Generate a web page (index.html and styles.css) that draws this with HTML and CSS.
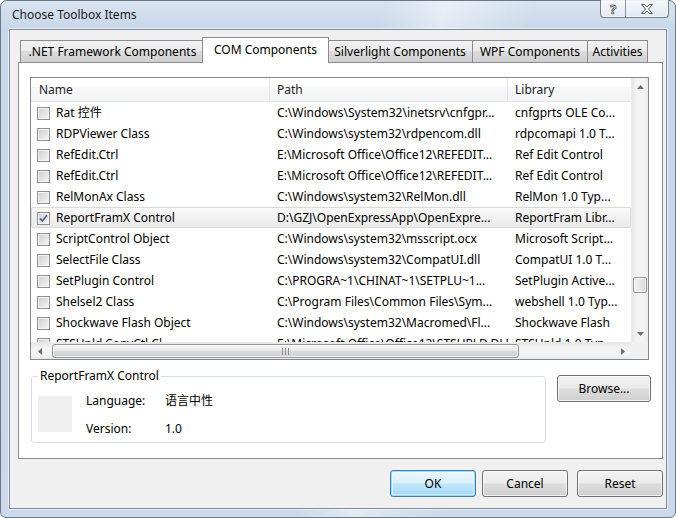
FILE: index.html
```html
<!DOCTYPE html>
<html lang="en">
<head>
    <meta charset="UTF-8">
    <title>Choose Toolbox Items</title>
    <link rel="stylesheet" href="styles.css">
</head>
<body>
    <div class="window">
        <div class="titlebar">
            <span class="title">Choose Toolbox Items</span>
            <div class="caption">
                <span class="cap cap-help">?</span>
                <span class="cap cap-close">
                    <svg width="12" height="10" viewBox="0 0 12 10">
                        <polygon points="0.5,0.5 3.5,0.5 6,3 8.5,0.5 11.5,0.5 7.5,5 11.5,9.5 8.5,9.5 6,7 3.5,9.5 0.5,9.5 4.5,5" fill="#fafafa" stroke="#5a5a5a" stroke-width="1"/>
                    </svg>
                </span>
            </div>
        </div>

        <div class="client">
            <div class="tabs">
                <div class="tab tab-net">.NET Framework Components</div>
                <div class="tab tab-com sel">COM Components</div>
                <div class="tab tab-sl">Silverlight Components</div>
                <div class="tab tab-wpf">WPF Components</div>
                <div class="tab tab-act">Activities</div>
            </div>

            <div class="panel">
                <div class="listview">
                    <div class="lv-view">
                        <div class="lv-head">
                            <div class="hcell">Name</div>
                            <div class="hcell">Path</div>
                            <div class="hcell">Library</div>
                        </div>
                        <div class="lv-row">
                            <div class="cell name"><span class="cb"></span>Rat 控件</div>
                            <div class="cell">C:\Windows\System32\inetsrv\cnfgpr...</div>
                            <div class="cell">cnfgprts OLE Co...</div>
                        </div>
                        <div class="lv-row">
                            <div class="cell name"><span class="cb"></span>RDPViewer Class</div>
                            <div class="cell">C:\Windows\system32\rdpencom.dll</div>
                            <div class="cell">rdpcomapi 1.0 T...</div>
                        </div>
                        <div class="lv-row">
                            <div class="cell name"><span class="cb"></span>RefEdit.Ctrl</div>
                            <div class="cell">E:\Microsoft Office\Office12\REFEDIT...</div>
                            <div class="cell">Ref Edit Control</div>
                        </div>
                        <div class="lv-row">
                            <div class="cell name"><span class="cb"></span>RefEdit.Ctrl</div>
                            <div class="cell">E:\Microsoft Office\Office12\REFEDIT...</div>
                            <div class="cell">Ref Edit Control</div>
                        </div>
                        <div class="lv-row">
                            <div class="cell name"><span class="cb"></span>RelMonAx Class</div>
                            <div class="cell">C:\Windows\system32\RelMon.dll</div>
                            <div class="cell">RelMon 1.0 Typ...</div>
                        </div>
                        <div class="lv-row sel">
                            <div class="cell name">
                                <span class="cb checked">
                                    <svg width="11" height="11" viewBox="0 0 11 11"><path d="M2 5.5 L4.3 8 L9 2.2" fill="none" stroke="#4b5f9c" stroke-width="1.7"/></svg>
                                </span>ReportFramX Control
                            </div>
                            <div class="cell">D:\GZJ\OpenExpressApp\OpenExpre...</div>
                            <div class="cell">ReportFram Libr...</div>
                        </div>
                        <div class="lv-row">
                            <div class="cell name"><span class="cb"></span>ScriptControl Object</div>
                            <div class="cell">C:\Windows\system32\msscript.ocx</div>
                            <div class="cell">Microsoft Script...</div>
                        </div>
                        <div class="lv-row">
                            <div class="cell name"><span class="cb"></span>SelectFile Class</div>
                            <div class="cell">C:\Windows\system32\CompatUI.dll</div>
                            <div class="cell">CompatUI 1.0 T...</div>
                        </div>
                        <div class="lv-row">
                            <div class="cell name"><span class="cb"></span>SetPlugin Control</div>
                            <div class="cell">C:\PROGRA~1\CHINAT~1\SETPLU~1...</div>
                            <div class="cell">SetPlugin Active...</div>
                        </div>
                        <div class="lv-row">
                            <div class="cell name"><span class="cb"></span>Shelsel2 Class</div>
                            <div class="cell">C:\Program Files\Common Files\Sym...</div>
                            <div class="cell">webshell 1.0 Typ...</div>
                        </div>
                        <div class="lv-row">
                            <div class="cell name"><span class="cb"></span>Shockwave Flash Object</div>
                            <div class="cell">C:\Windows\system32\Macromed\Fl...</div>
                            <div class="cell">Shockwave Flash</div>
                        </div>
                        <div class="lv-row">
                            <div class="cell name"><span class="cb"></span>STSUpld.CopyCtl Cl...</div>
                            <div class="cell">E:\Microsoft Office\Office12\STSUPLD.DLL</div>
                            <div class="cell">STSUpld 1.0 Typ...</div>
                        </div>
                    </div>

                    <div class="vscroll">
                        <div class="sb-btn">
                            <svg width="7" height="4" viewBox="0 0 7 4"><polygon points="0,4 3.5,0 7,4" fill="#6b6b6b"/></svg>
                        </div>
                        <div class="sb-track">
                            <div class="vthumb"></div>
                        </div>
                        <div class="sb-btn">
                            <svg width="7" height="4" viewBox="0 0 7 4"><polygon points="0,0 3.5,4 7,0" fill="#6b6b6b"/></svg>
                        </div>
                    </div>

                    <div class="hscroll">
                        <div class="sb-btn">
                            <svg width="4" height="7" viewBox="0 0 4 7"><polygon points="4,0 0,3.5 4,7" fill="#6b6b6b"/></svg>
                        </div>
                        <div class="sb-track">
                            <div class="hthumb">
                                <svg width="7" height="7" viewBox="0 0 7 7">
                                    <rect x="0" y="0" width="1" height="7" fill="#8d8d8d"/>
                                    <rect x="3" y="0" width="1" height="7" fill="#8d8d8d"/>
                                    <rect x="6" y="0" width="1" height="7" fill="#8d8d8d"/>
                                </svg>
                            </div>
                        </div>
                        <div class="sb-btn">
                            <svg width="4" height="7" viewBox="0 0 4 7"><polygon points="0,0 4,3.5 0,7" fill="#6b6b6b"/></svg>
                        </div>
                    </div>

                    <div class="sb-corner"></div>
                </div>

                <div class="details">
                    <fieldset class="group">
                        <legend>ReportFramX Control</legend>
                        <div class="group-body">
                            <div class="icon-box"></div>
                            <div class="props">
                                <span>Language:</span><span>语言中性</span>
                                <span>Version:</span><span>1.0</span>
                            </div>
                        </div>
                    </fieldset>
                    <button class="btn browse">Browse...</button>
                </div>
            </div>

            <div class="footer">
                <button class="btn default">OK</button>
                <button class="btn">Cancel</button>
                <button class="btn reset">Reset</button>
            </div>
        </div>
    </div>
</body>
</html>
```

FILE: styles.css
```css
* {
    margin: 0;
    padding: 0;
    box-sizing: border-box;
}

body {
    width: 676px;
    height: 518px;
    overflow: hidden;
    background: #fff;
    font-family: "Noto Sans", "Noto Sans CJK SC", sans-serif;
    font-size: 12px;
    color: #000;
}

/* window frame */
.window {
    width: 676px;
    height: 518px;
    display: flex;
    flex-direction: column;
    padding: 0 8px 8px 8px;
    border: 1px solid #6c7886;
    border-radius: 7px 7px 6px 6px;
    background:
        linear-gradient(100deg, rgba(255,255,255,0) 50%, rgba(255,255,255,0.45) 58%, rgba(255,255,255,0) 70%),
        linear-gradient(180deg, #d8e3f0 0, #c8d7e9 28px, #cbd9ea 100%);
}

.titlebar {
    height: 28px;
    display: flex;
    align-items: flex-start;
    margin: 0 -2px 0 3px;
}

.title {
    padding-top: 6px;
    line-height: 16px;
    color: #1b1b1b;
}

.caption {
    margin-left: auto;
    display: flex;
    height: 18px;
    margin-top: -1px;
    border: 1px solid #72808f;
    border-top: none;
    border-radius: 0 0 4px 4px;
    background: linear-gradient(180deg, rgba(255,255,255,0.75), rgba(236,241,247,0.6));
    box-shadow: inset 0 0 0 1px rgba(255,255,255,0.6);
}

.cap {
    display: flex;
    align-items: center;
    justify-content: center;
    height: 17px;
}

.cap-help {
    width: 25px;
    border-right: 1px solid #8894a2;
    font-weight: bold;
    font-size: 13px;
    color: #fafafa;
    -webkit-text-stroke: 0.8px #5a5a5a;
}

.cap-close {
    width: 42px;
}

/* client area */
.client {
    flex: 1;
    display: flex;
    flex-direction: column;
    padding: 7px 3px 11px 8px;
    background: #f0f0f0;
    border: 1px solid #7d8b9a;
    box-shadow: 0 0 0 1px rgba(255,255,255,0.55);
}

.tabs {
    display: flex;
    align-items: flex-end;
    height: 25px;
    padding-left: 2px;
    position: relative;
    z-index: 1;
}

.tab {
    height: 22px;
    padding-top: 1px;
    line-height: 20px;
    text-align: center;
    white-space: nowrap;
    border: 1px solid #898c95;
    border-bottom: none;
    margin-right: -1px;
    background: linear-gradient(180deg, #f2f2f2 0%, #ebebeb 45%, #dddddd 50%, #cfcfcf 100%);
}

.tab-net { width: 185px; }
.tab-com { width: 127px; }
.tab-sl { width: 146px; }
.tab-wpf { width: 116px; }
.tab-act { width: 61px; }

.tab.sel {
    height: 26px;
    line-height: 22px;
    margin: 0 -2px -1px -2px;
    background: #fff;
    position: relative;
    z-index: 2;
}

.panel {
    height: 397px;
    border: 1px solid #898c95;
    background: #fff;
    padding: 14px 0 0 11px;
}

/* list view */
.listview {
    width: 619px;
    height: 283px;
    border: 1px solid #828790;
    display: grid;
    grid-template-columns: 600px 17px;
    grid-template-rows: 264px 17px;
}

.lv-view {
    overflow: hidden;
}

.lv-head,
.lv-row {
    display: grid;
    grid-template-columns: 239px 238px 140px;
}

.lv-head {
    height: 24px;
    border-bottom: 1px solid #e2e3e5;
    background: linear-gradient(180deg, #fff 0%, #fff 38%, #f6f7f8 40%, #f3f4f6 100%);
}

.hcell {
    padding: 1px 0 0 7px;
    line-height: 22px;
    color: #1e1e1e;
    border-right: 1px solid #e5e5e5;
}

.hcell:first-child {
    padding-left: 8px;
}

.lv-row {
    height: 21px;
    line-height: 20px;
}

.lv-row.sel {
    background: linear-gradient(180deg, #fafafa, #e9e9e9);
    box-shadow: inset 0 0 0 1px #dadada;
    border-radius: 2px;
}

.cell {
    padding: 1px 0 0 7px;
    white-space: nowrap;
    overflow: hidden;
}

.cell.name {
    display: flex;
    align-items: center;
    padding-left: 6px;
}

.cb {
    width: 13px;
    height: 13px;
    margin-right: 6px;
    flex: none;
    border: 1px solid #8e8f8f;
    background: linear-gradient(135deg, #cdcdcd, #f6f6f6);
    box-shadow: inset 0 0 0 1px #f4f4f4;
    display: flex;
}

/* scrollbars */
.vscroll,
.hscroll {
    display: flex;
    background: linear-gradient(90deg, #e6e6e6, #f3f3f3 30%, #f3f3f3 70%, #ebebeb);
}

.vscroll {
    flex-direction: column;
    grid-row: 1;
    grid-column: 2;
    border-left: 1px solid #ececec;
}

.hscroll {
    grid-row: 2;
    grid-column: 1;
    background: linear-gradient(180deg, #e6e6e6, #f3f3f3 30%, #f3f3f3 70%, #ebebeb);
    border-top: 1px solid #ececec;
}

.sb-btn {
    width: 17px;
    height: 17px;
    flex: none;
    display: flex;
    align-items: center;
    justify-content: center;
}

.vscroll .sb-btn {
    width: 16px;
}

.hscroll .sb-btn {
    height: 16px;
}

.sb-track {
    flex: 1;
}

.vthumb {
    width: 14px;
    height: 16px;
    margin: 182px 0 0 1px;
    border: 1px solid #979797;
    border-radius: 2px;
    background: linear-gradient(90deg, #f4f4f4, #e6e6e6 50%, #d9d9d9);
    box-shadow: inset 0 0 0 1px rgba(255,255,255,0.7);
}

.hthumb {
    width: 467px;
    height: 14px;
    margin: 1px 0 0 4px;
    border: 1px solid #979797;
    border-radius: 3px;
    background: linear-gradient(180deg, #f4f4f4, #e8e8e8 50%, #d9d9d9 51%, #d2d2d2);
    box-shadow: inset 0 0 0 1px rgba(255,255,255,0.7);
    display: flex;
    align-items: center;
    justify-content: center;
}

.sb-corner {
    grid-row: 2;
    grid-column: 2;
    background: #f0f0f0;
}

/* details */
.details {
    display: flex;
    align-items: flex-start;
    margin-top: 8px;
}

.group {
    width: 515px;
    margin-left: 1px;
    padding: 0 6px 0 6px;
    border: 1px solid #d5dfe5;
    border-radius: 3px;
}

.group legend {
    padding: 0 2px;
    line-height: 16px;
}

.group-body {
    display: flex;
    align-items: flex-start;
    padding-top: 12px;
}

.icon-box {
    width: 34px;
    height: 36px;
    background: #f0f0f0;
}

.props {
    display: grid;
    grid-template-columns: 79px auto;
    grid-auto-rows: 28px;
    align-items: center;
    margin: -10px 0 0 14px;
}

/* buttons */
.btn {
    width: 86px;
    height: 27px;
    font-family: inherit;
    font-size: 12px;
    color: #000;
    border: 1px solid #707070;
    border-radius: 3px;
    background: linear-gradient(180deg, #f2f2f2 0%, #ebebeb 48%, #dddddd 52%, #cfcfcf 100%);
    box-shadow: inset 0 0 0 1px rgba(255,255,255,0.75);
}

.btn.browse {
    width: 94px;
    margin: 7px 0 0 11px;
}

.btn.default {
    border-color: #3c7fb1;
    background: linear-gradient(180deg, #eaf6fd 0%, #d9f0fc 48%, #bee6fd 52%, #a7d9f5 100%);
    box-shadow: inset 0 0 0 1px #9ddcf9, inset 0 0 0 2px rgba(255,255,255,0.4);
}

.footer {
    display: flex;
    justify-content: flex-end;
    gap: 6px;
    margin-top: 11px;
}

.btn.reset {
    margin-left: 3px;
}
```
